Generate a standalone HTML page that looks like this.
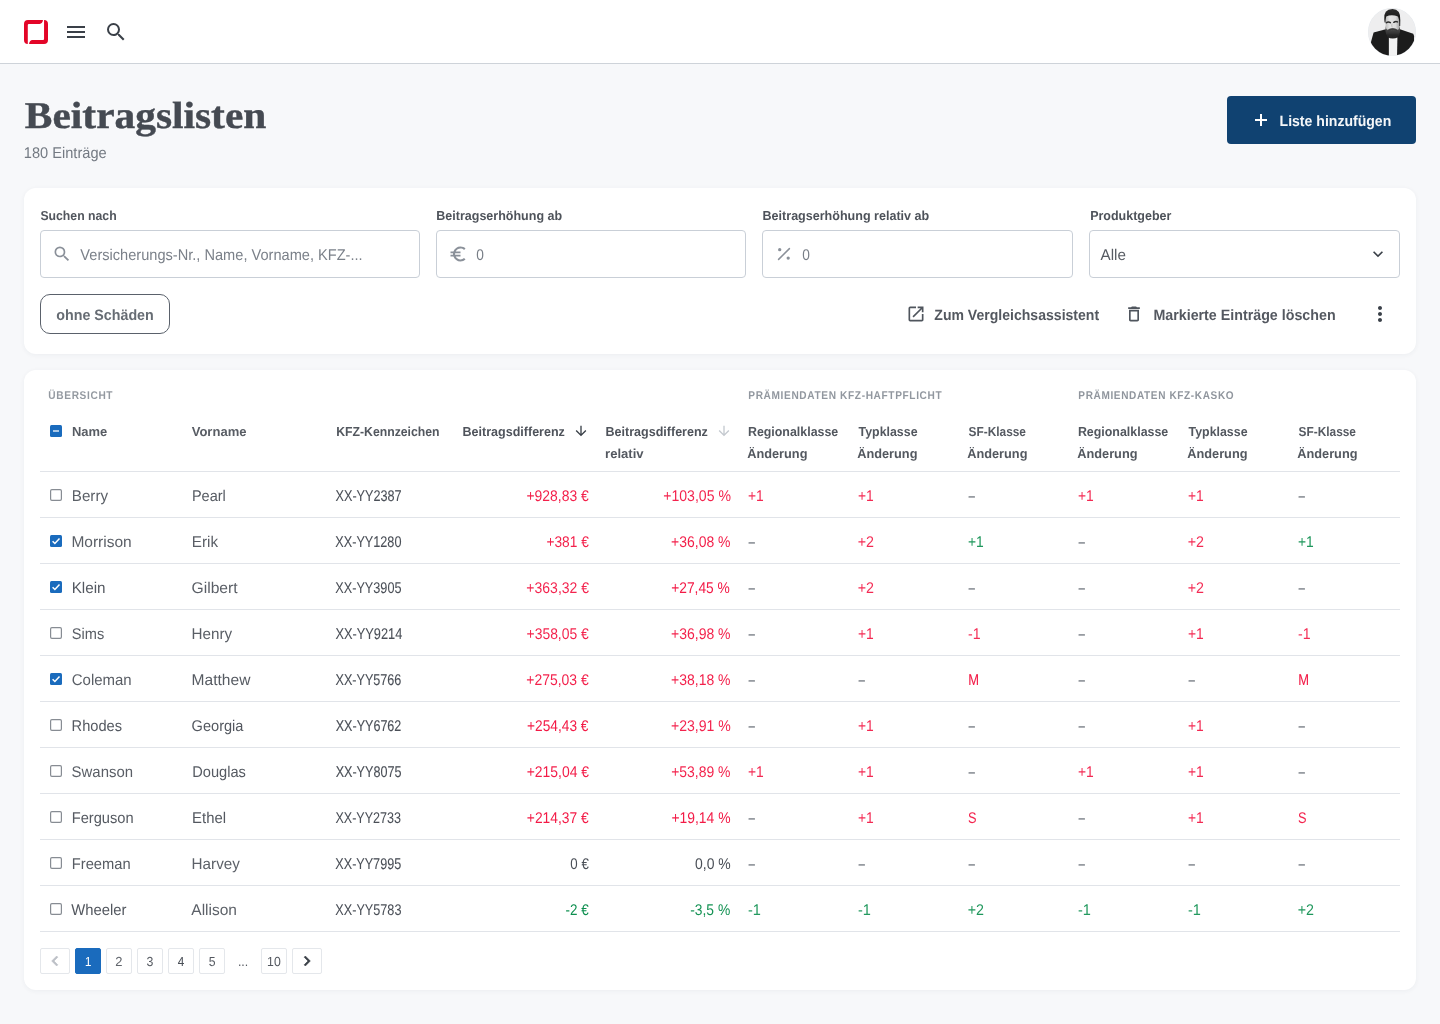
<!DOCTYPE html>
<html lang="de">
<head>
<meta charset="utf-8">
<title>Beitragslisten</title>
<style>
*{box-sizing:border-box;margin:0;padding:0}
html,body{width:1440px;height:1024px;overflow:hidden}
body{background:#f7f8fa;color:#4a4f56}
#app{position:absolute;left:0;top:0;width:1440px;height:1024px;will-change:transform}
svg{display:block}
.t{display:inline-block;position:relative;white-space:pre;transform-origin:0 50%}

/* top bar */
.topbar{position:absolute;left:0;top:0;width:1440px;height:64px;background:#fff;border-bottom:1px solid #ced3d9}
.topbar .logo{position:absolute;left:24px;top:20px;width:24px;height:24px}
.topbar .ic{position:absolute;top:20px;width:24px;height:24px;fill:#3a4048}
.avatar{position:absolute;left:1368px;top:8px;width:48px;height:48px}

/* page head */
h1{position:absolute;left:24px;top:91px;height:48px;line-height:48px;font-weight:700;color:#454a52;white-space:nowrap}
.sub{position:absolute;left:24px;top:141px;height:24px;line-height:24px;color:#6c737c;white-space:nowrap}
.btn-primary{position:absolute;left:1227px;top:96px;width:189px;height:48px;border-radius:4px;background:#104271;color:#fff;border:0}
.btn-primary svg{position:absolute;left:22px;top:12px;width:24px;height:24px;fill:#fff}
.btn-primary .lbl{position:absolute;left:52px;top:13px;height:24px;line-height:24px;white-space:nowrap}

/* cards */
.card{position:absolute;left:24px;width:1392px;background:#fff;border-radius:12px;box-shadow:0 1px 5px rgba(40,50,70,.055)}
.filters{top:188px;height:166px}
.tablecard{top:370px;height:620px}

/* filter fields */
.field{position:absolute;top:0}
.field label{position:absolute;left:0;top:18px;height:20px;line-height:20px;color:#454a52;white-space:nowrap}
.field .inp{position:absolute;left:0;top:42px;height:48px;width:100%;border:1px solid #c9cfd7;border-radius:4px;background:#fff}
.field .inp svg{position:absolute;left:11px;top:13px;width:20px;height:20px;fill:#8a9099}
.field .inp .ph{position:absolute;left:39px;top:12px;height:24px;line-height:24px;color:#767c85;white-space:nowrap}
.field .inp .val{position:absolute;left:11px;top:12px;height:24px;line-height:24px;color:#4a4f57;white-space:nowrap}
.field .inp .chev{left:auto;right:11px;top:13px;fill:#3a4048}
.chip{position:absolute;left:16px;top:106px;width:130px;height:40px;border:1px solid #5a616b;border-radius:10px;background:#fff;color:#5b6169;line-height:38px;padding-top:1px;text-align:center;white-space:nowrap}
.act{position:absolute;top:114px;height:24px;color:#484d55;white-space:nowrap}
.act svg{position:absolute;left:0;top:2px;width:20px;height:20px;fill:#4f555d}
.act .lbl{position:absolute;left:28px;top:1px;height:24px;line-height:24px}
.more{position:absolute;left:1344px;top:114px;width:24px;height:24px;fill:#3a4048}

/* table */
table{position:absolute;left:16px;top:0;width:1360px;border-collapse:collapse;table-layout:fixed}
th,td{text-align:left;padding:0 8px;white-space:nowrap;overflow:visible;font-weight:400}
tr.grp th{height:49px;vertical-align:top;padding-top:18px;line-height:16px;color:#8d939b}
tr.hd th{height:52px;vertical-align:top;padding-top:2px;line-height:22px;color:#484d55;border-bottom:1px solid #e1e4e9;position:relative}
tr.hd th .arr{position:absolute;top:4px;width:16px;height:16px}
tbody td{height:46px;border-bottom:1px solid #e1e4e9;line-height:24px;color:#4a4f57;vertical-align:top;padding-top:12.500px}
td.n,th.n{padding-left:32px;position:relative}
td.r{text-align:right}
td.r2{padding-right:9px}
.cb{position:absolute;left:10px;width:12px;height:12px;border-radius:1.500px}
td .cb{top:17px}
th .cb{top:6px}
.cb.on{background:#1a6bbd}
.cb svg{width:12px;height:12px}
.red{color:#f31a46}
.grn{color:#0d8f4f}
.mut{color:#8f949a}

/* pagination */
.pager{position:absolute;left:16px;top:578px;height:26px}
.pager .pb{position:absolute;top:0;height:26px;width:26px;border:1px solid #e4e7eb;border-radius:2px;background:#fff;line-height:24px;padding-top:1px;text-align:center;color:#4a4f57}
.pager .pb.cur{background:#1a6bbd;border-color:#1a6bbd;color:#fff}
.pager .pb.dots{border-color:transparent;background:transparent}
.pager .pb svg{position:absolute;left:4px;top:2px;width:20px;height:20px}
.pager .pb svg path{stroke-width:.7;stroke-linejoin:round}
body{font-family:"Liberation Sans",sans-serif;font-size:15.5px;text-rendering:geometricPrecision}
.sb{font-weight:700;font-size:15px}
h1{font-family:"Liberation Serif",serif;font-size:38px}
h1 .t{-webkit-text-stroke:.3px currentColor}
.field label{font-size:13.5px}
.field label .sb,tr.hd th .sb{font-size:13px}
tr.grp th{font-size:11.2px;letter-spacing:.7px;font-weight:700}
tr.grp th .t{-webkit-text-stroke:0}
tr.hd th{font-size:13.5px}
.pager .pb{font-size:13.2px}
.mut .t{font-weight:700;-webkit-text-stroke:0}

</style>
</head>
<body>
<div id="app">

<header class="topbar">
  <svg class="logo" viewBox="0 0 24 24"><path fill="#e30528" d="M19 0H4A4 4 0 0 0 0 4V20A4 4 0 0 0 3.800 23.980V4.900Q3.800 3.900 4.800 3.900H15.600C17.600 3.900 18.800 2 19 0ZM20.050 0A4 4 0 0 1 24 4V20A4 4 0 0 1 20 24H5.050C5.250 22 6.450 20.100 8.450 20.100H19.050Q20.050 20.100 20.050 19.100Z"/></svg>
  <svg class="ic" style="left:64px" viewBox="0 0 24 24"><path d="M3 18h18v-2H3v2zm0-5h18v-2H3v2zm0-7v2h18V6H3z"/></svg>
  <svg class="ic" style="left:104px" viewBox="0 0 24 24"><path d="M15.500 14h-.79l-.28-.27A6.471 6.471 0 0 0 16 9.500 6.500 6.500 0 1 0 9.500 16c1.610 0 3.090-.59 4.230-1.570l.27.28v.79l5 4.990L20.490 19l-4.990-5zm-6 0C7.010 14 5 11.990 5 9.500S7.010 5 9.500 5 14 7.010 14 9.500 11.990 14 9.500 14z"/></svg>
  <div class="avatar">
    <svg viewBox="0 0 48 48" width="48" height="48">
      <defs>
        <clipPath id="avc"><circle cx="24" cy="24" r="23.700"/></clipPath>
        <filter id="bl" x="-10%" y="-10%" width="120%" height="120%"><feGaussianBlur stdDeviation=".55"/></filter>
        <linearGradient id="fc" x1="0" y1="0" x2="1" y2="0"><stop offset="0" stop-color="#bdbdbd"/><stop offset=".3" stop-color="#e4e4e4"/><stop offset=".7" stop-color="#dadada"/><stop offset="1" stop-color="#a0a0a0"/></linearGradient>
        <linearGradient id="bd" x1="0" y1="0" x2="0" y2="1"><stop offset="0" stop-color="#8a8a8a"/><stop offset=".3" stop-color="#4a4a4a"/><stop offset=".7" stop-color="#2a2a2a"/><stop offset="1" stop-color="#1f1f1f"/></linearGradient>
        <linearGradient id="hr" x1="0" y1="0" x2="0" y2="1"><stop offset="0" stop-color="#2e2e2e"/><stop offset=".5" stop-color="#1b1b1b"/><stop offset="1" stop-color="#2a2a2a"/></linearGradient>
      </defs>
      <circle cx="24" cy="24" r="24" fill="#e2e7ec"/>
      <g clip-path="url(#avc)">
        <rect width="48" height="48" fill="#eeeeef"/>
        <g filter="url(#bl)">
          <path d="M5.600 24.400L17.800 21.200L32 21.200L45.200 25.700Q46.500 27.500 46 30.500L46.500 50H1L3.100 33.500Z" fill="#1d1d1d"/>
          <path d="M20.900 29.500L29.400 29.500L29 50L20.900 50Z" fill="#f2f2f2"/>
          <path d="M17.500 10Q17.500 6 24 6Q31.300 6 31.500 10L31.800 21Q31 29 24.800 29.500Q18.500 29 17.700 21Z" fill="url(#fc)"/>
          <path d="M16.300 11.500Q15.200 1.200 24.500 1Q32.800 1.200 32.300 12L32.200 18L31.200 18Q31.500 10 29.500 8.200Q23 6.300 18.200 8.600L17.700 11.500L17.500 14.500L16.600 14.500Z" fill="url(#hr)"/>
          <path d="M17.600 17.500Q18 22 19.800 21.800Q21.500 20.300 24.600 20.100Q27.800 20.300 29.500 21.800Q31.300 22 31.900 17.500L32.100 23.500Q31 30.600 24.800 30.600Q18.400 30.600 17.500 23.500Z" fill="url(#bd)"/>
          <path d="M20.800 22.600Q22.500 20.900 24.400 21.300Q26.500 20.900 28.600 22.400" stroke="#3a3a3a" stroke-width="1.100" fill="none" stroke-linecap="round"/>
          <path d="M18.400 14.700Q20.300 13.300 22.400 14.700M25.800 14.300Q27.600 13 29.500 13.900" stroke="#2e2e2e" stroke-width="1.500" fill="none" stroke-linecap="round"/>
          <path d="M24 15.500Q23.300 18.300 24.300 19.300" stroke="#b4b4b4" stroke-width=".8" fill="none"/>
        </g>
      </g>
    </svg>
  </div>
</header>

<h1><span class="t" style="transform:translate(0.87px,1px) scaleX(1.0892);-webkit-text-stroke:0.408px currentColor">Beitragslisten</span></h1>
<div class="sub"><span class="t" style="transform:translate(-0.24px,1px) scaleX(0.9428);opacity:0.945">180 Einträge</span></div>
<div class="btn-primary">
  <svg viewBox="0 0 24 24"><path d="M11 6h2v5h5v2h-5v5h-2v-5H6v-2h5z"/></svg>
  <div class="lbl"><span class="t sb" style="transform:translate(0.55px,1px) scaleX(0.9377);opacity:0.959">Liste hinzufügen</span></div>
</div>

<section class="card filters">
  <div class="field" style="left:16px;width:380px">
    <label><span class="t sb" style="transform:translate(0.4px,0px) scaleX(0.9424);opacity:0.929">Suchen nach</span></label>
    <div class="inp">
      <svg viewBox="0 0 24 24"><path d="M15.500 14h-.79l-.28-.27A6.471 6.471 0 0 0 16 9.500 6.500 6.500 0 1 0 9.500 16c1.610 0 3.090-.59 4.230-1.570l.27.28v.79l5 4.990L20.490 19l-4.990-5zm-6 0C7.010 14 5 11.990 5 9.500S7.010 5 9.500 5 14 7.010 14 9.500 11.990 14 9.500 14z"/></svg>
      <div class="ph"><span class="t" style="transform:translate(0.33px,1px) scaleX(0.9417);opacity:0.963">Versicherungs-Nr., Name, Vorname, KFZ-...</span></div>
    </div>
  </div>
  <div class="field" style="left:412px;width:310px">
    <label><span class="t sb" style="transform:translate(0.3px,0px) scaleX(0.9624);opacity:0.949">Beitragserhöhung ab</span></label>
    <div class="inp">
      <svg viewBox="0 0 24 24"><path d="M15 18.500c-2.510 0-4.680-1.420-5.760-3.500H15v-2H8.580c-.05-.33-.08-.66-.08-1s.03-.67.08-1H15V9H9.240C10.320 6.920 12.500 5.500 15 5.500c1.610 0 3.090.59 4.230 1.570L21 5.300C19.410 3.870 17.300 3 15 3c-3.920 0-7.240 2.510-8.480 6H3v2h3.060c-.04.33-.06.66-.06 1s.02.67.06 1H3v2h3.520c1.240 3.490 4.560 6 8.480 6 2.310 0 4.410-.87 6-2.300l-1.780-1.770c-1.130.98-2.600 1.570-4.220 1.570z"/></svg>
      <div class="ph"><span class="t" style="transform:translate(0.15px,1px) scaleX(0.8849);opacity:0.983">0</span></div>
    </div>
  </div>
  <div class="field" style="left:738px;width:311px">
    <label><span class="t sb" style="transform:translate(0.54px,0px) scaleX(0.9653);opacity:0.953">Beitragserhöhung relativ ab</span></label>
    <div class="inp">
      <svg viewBox="0 0 20 20"><path d="M15.400 4.600L4.600 15.400" fill="none" stroke="#8a9099" stroke-width="1.500" stroke-linecap="round"/><circle cx="5.700" cy="5.700" r="1.650"/><circle cx="14.200" cy="14.100" r="1.650"/></svg>
      <div class="ph"><span class="t" style="transform:translate(0.15px,1px) scaleX(0.8849);opacity:0.983">0</span></div>
    </div>
  </div>
  <div class="field" style="left:1065px;width:311px">
    <label><span class="t sb" style="transform:translate(1.13px,0px) scaleX(0.9607);opacity:0.952">Produktgeber</span></label>
    <div class="inp">
      <div class="val"><span class="t" style="transform:translate(-0.51px,1px) scaleX(0.9811);opacity:0.925">Alle</span></div>
      <svg class="chev" viewBox="0 0 24 24"><path d="M7.410 8.590L12 13.170l4.590-4.580L18 10l-6 6-6-6 1.410-1.410z"/></svg>
    </div>
  </div>
  <div class="chip"><span class="t sb" style="transform:translate(2.28px,1px) scaleX(0.9507);opacity:0.93">ohne Schäden</span></div>
  <div class="act" style="left:882px;width:200px">
    <svg viewBox="0 0 24 24"><path d="M19 19H5V5h7V3H5a2 2 0 0 0-2 2v14a2 2 0 0 0 2 2h14c1.100 0 2-.9 2-2v-7h-2v7zM14 3v2h3.590l-9.830 9.830 1.410 1.410L19 6.410V10h2V3h-7z"/></svg>
    <div class="lbl"><span class="t sb" style="transform:translate(0.3px,1px) scaleX(0.937);opacity:0.936">Zum Vergleichsassistent</span></div>
  </div>
  <div class="act" style="left:1100px;width:220px">
    <svg viewBox="0 0 24 24"><path d="M16 9v10H8V9h8m-1.500-6h-5l-1 1H5v2h14V4h-3.500l-1-1zM18 7H6v12c0 1.100.9 2 2 2h8c1.100 0 2-.9 2-2V7z"/></svg>
    <div class="lbl"><span class="t sb" style="transform:translate(1.4px,1px) scaleX(0.9503);opacity:0.932">Markierte Einträge löschen</span></div>
  </div>
  <svg class="more" viewBox="0 0 24 24"><path d="M12 8c1.100 0 2-.9 2-2s-.9-2-2-2-2 .9-2 2 .9 2 2 2zm0 2c-1.100 0-2 .9-2 2s.9 2 2 2 2-.9 2-2-.9-2-2-2zm0 6c-1.100 0-2 .9-2 2s.9 2 2 2 2-.9 2-2-.9-2-2-2z"/></svg>
</section>

<section class="card tablecard">
<table>
<colgroup><col style="width:144px"><col style="width:144px"><col style="width:126px"><col style="width:143px"><col style="width:143px"><col style="width:110px"><col style="width:110px"><col style="width:110px"><col style="width:110px"><col style="width:110px"><col style="width:110px"></colgroup>
<thead>
<tr class="grp"><th colspan="5"><span class="t" style="transform:translate(0.33px,0px) scaleX(0.9059);opacity:0.942">ÜBERSICHT</span></th><th colspan="3"><span class="t" style="transform:translate(0.26px,0px) scaleX(0.9045);opacity:0.957">PRÄMIENDATEN KFZ-HAFTPFLICHT</span></th><th colspan="3"><span class="t" style="transform:translate(0.33px,0px) scaleX(0.8977);opacity:0.971">PRÄMIENDATEN KFZ-KASKO</span></th></tr>
<tr class="hd"><th class="n"><span class="cb on"><svg viewBox="0 0 12 12"><path d="M3 6h6" fill="none" stroke="#fff" stroke-opacity=".75" stroke-width="1.700"/></svg></span><span class="t sb" style="transform:translate(-0.01px,0px) scaleX(0.9966);opacity:0.913">Name</span></th><th><span class="t sb" style="transform:translate(-0.31px,0px) scaleX(1.0017);opacity:0.906">Vorname</span></th><th><span class="t sb" style="transform:translate(0.14px,0px) scaleX(0.9424);opacity:0.936">KFZ-Kennzeichen</span></th><th><span class="t sb" style="transform:translate(0.55px,0px) scaleX(0.9636);opacity:0.96">Beitragsdifferenz</span><svg class="arr" style="left:119px" viewBox="0 0 24 24"><path fill="#3a4048" d="M20 12l-1.410-1.410L13 16.170V4h-2v12.170l-5.580-5.590L4 12l8 8 8-8z"/></svg></th><th><span class="t sb" style="transform:translate(0.55px,0px) scaleX(0.9636);opacity:0.96">Beitragsdifferenz</span><br><span class="t sb" style="transform:translate(0.07px,0px) scaleX(1.007);opacity:0.932">relativ</span><svg class="arr" style="left:119px" viewBox="0 0 24 24"><path fill="#c4c9cf" d="M20 12l-1.410-1.410L13 16.170V4h-2v12.170l-5.580-5.590L4 12l8 8 8-8z"/></svg></th><th><span class="t sb" style="transform:translate(-0.08px,0px) scaleX(0.954);opacity:0.941">Regionalklasse</span><br><span class="t sb" style="transform:translate(-0.76px,0px) scaleX(0.9804);opacity:0.936">Änderung</span></th><th><span class="t sb" style="transform:translate(0.55px,0px) scaleX(0.9528);opacity:0.939">Typklasse</span><br><span class="t sb" style="transform:translate(-0.76px,0px) scaleX(0.9804);opacity:0.936">Änderung</span></th><th><span class="t sb" style="transform:translate(0.5px,0px) scaleX(0.9143);opacity:0.922">SF-Klasse</span><br><span class="t sb" style="transform:translate(-0.76px,0px) scaleX(0.9804);opacity:0.936">Änderung</span></th><th><span class="t sb" style="transform:translate(-0.12px,0px) scaleX(0.9548);opacity:0.941">Regionalklasse</span><br><span class="t sb" style="transform:translate(-0.74px,0px) scaleX(0.9813);opacity:0.936">Änderung</span></th><th><span class="t sb" style="transform:translate(0.55px,0px) scaleX(0.9528);opacity:0.939">Typklasse</span><br><span class="t sb" style="transform:translate(-0.74px,0px) scaleX(0.9813);opacity:0.936">Änderung</span></th><th><span class="t sb" style="transform:translate(0.5px,0px) scaleX(0.9143);opacity:0.922">SF-Klasse</span><br><span class="t sb" style="transform:translate(-0.74px,0px) scaleX(0.9813);opacity:0.936">Änderung</span></th></tr>
</thead><tbody>
<tr><td class="n"><span class="cb"><svg viewBox="0 0 12 12"><rect x=".6" y=".6" width="10.800" height="10.800" rx="1.300" fill="#fff" stroke="#878c93" stroke-width="1.200"/></svg></span><span class="t" style="transform:translate(-0.25px,1px) scaleX(0.9796);opacity:0.9">Berry</span></td><td><span class="t" style="transform:translate(-0.09px,1px) scaleX(0.9375);opacity:0.93">Pearl</span></td><td class="k"><span class="t" style="transform:translate(-0.46px,1px) scaleX(0.8154);-webkit-text-stroke:0.093px currentColor">XX-YY2387</span></td><td class="r red"><span class="t" style="transform:translate(6.45px,1px) scaleX(0.8983);opacity:0.976">+928,83 €</span></td><td class="r r2 red"><span class="t" style="transform:translate(6.21px,1px) scaleX(0.9083);opacity:0.957">+103,05 %</span></td><td class="red"><span class="t" style="transform:translate(-0.03px,1px) scaleX(0.8949);opacity:0.931">+1</span></td><td class="red"><span class="t" style="transform:translate(-0.03px,1px) scaleX(0.8949);opacity:0.931">+1</span></td><td class="mut"><span class="t" style="transform:translate(0.25px,1px) scaleX(0.8149);-webkit-text-stroke:0.052px currentColor">–</span></td><td class="red"><span class="t" style="transform:translate(-0.03px,1px) scaleX(0.8949);opacity:0.931">+1</span></td><td class="red"><span class="t" style="transform:translate(-0.03px,1px) scaleX(0.8949);opacity:0.931">+1</span></td><td class="mut"><span class="t" style="transform:translate(0.25px,1px) scaleX(0.8149);-webkit-text-stroke:0.052px currentColor">–</span></td></tr>
<tr><td class="n"><span class="cb on"><svg viewBox="0 0 12 12"><path d="M2.600 6.200l2.300 2.300 4.600-4.900" fill="none" stroke="#fff" stroke-width="1.500"/></svg></span><span class="t" style="transform:translate(-0.61px,1px) scaleX(1.001);opacity:0.902">Morrison</span></td><td><span class="t" style="transform:translate(-0.21px,1px) scaleX(0.9823);opacity:0.911">Erik</span></td><td class="k"><span class="t" style="transform:translate(-0.7px,1px) scaleX(0.8166);-webkit-text-stroke:0.093px currentColor">XX-YY1280</span></td><td class="r red"><span class="t" style="transform:translate(5.41px,1px) scaleX(0.8864);opacity:0.97">+381 €</span></td><td class="r r2 red"><span class="t" style="transform:translate(6.11px,1px) scaleX(0.9003);opacity:0.978">+36,08 %</span></td><td class="mut"><span class="t" style="transform:translate(0.25px,1px) scaleX(0.8149);-webkit-text-stroke:0.052px currentColor">–</span></td><td class="red"><span class="t" style="transform:translate(-0.25px,1px) scaleX(0.9214);opacity:0.925">+2</span></td><td class="grn"><span class="t" style="transform:translate(-0.03px,1px) scaleX(0.895);opacity:0.927">+1</span></td><td class="mut"><span class="t" style="transform:translate(0.25px,1px) scaleX(0.8149);-webkit-text-stroke:0.052px currentColor">–</span></td><td class="red"><span class="t" style="transform:translate(-0.25px,1px) scaleX(0.9214);opacity:0.925">+2</span></td><td class="grn"><span class="t" style="transform:translate(-0.03px,1px) scaleX(0.895);opacity:0.927">+1</span></td></tr>
<tr><td class="n"><span class="cb on"><svg viewBox="0 0 12 12"><path d="M2.600 6.200l2.300 2.300 4.600-4.900" fill="none" stroke="#fff" stroke-width="1.500"/></svg></span><span class="t" style="transform:translate(-0.33px,1px) scaleX(0.9841);opacity:0.944">Klein</span></td><td><span class="t" style="transform:translate(-0.47px,1px) scaleX(1.0093);opacity:0.911">Gilbert</span></td><td class="k"><span class="t" style="transform:translate(-0.69px,1px) scaleX(0.8172);-webkit-text-stroke:0.06px currentColor">XX-YY3905</span></td><td class="r red"><span class="t" style="transform:translate(6.36px,1px) scaleX(0.9029);opacity:0.956">+363,32 €</span></td><td class="r r2 red"><span class="t" style="transform:translate(6.22px,1px) scaleX(0.8899)">+27,45 %</span></td><td class="mut"><span class="t" style="transform:translate(0.25px,1px) scaleX(0.8149);-webkit-text-stroke:0.052px currentColor">–</span></td><td class="red"><span class="t" style="transform:translate(-0.25px,1px) scaleX(0.9214);opacity:0.925">+2</span></td><td class="mut"><span class="t" style="transform:translate(0.25px,1px) scaleX(0.8149);-webkit-text-stroke:0.052px currentColor">–</span></td><td class="mut"><span class="t" style="transform:translate(0.25px,1px) scaleX(0.8149);-webkit-text-stroke:0.052px currentColor">–</span></td><td class="red"><span class="t" style="transform:translate(-0.25px,1px) scaleX(0.9214);opacity:0.925">+2</span></td><td class="mut"><span class="t" style="transform:translate(0.25px,1px) scaleX(0.8149);-webkit-text-stroke:0.052px currentColor">–</span></td></tr>
<tr><td class="n"><span class="cb"><svg viewBox="0 0 12 12"><rect x=".6" y=".6" width="10.800" height="10.800" rx="1.300" fill="#fff" stroke="#878c93" stroke-width="1.200"/></svg></span><span class="t" style="transform:translate(-0.14px,1px) scaleX(0.9418);opacity:0.911">Sims</span></td><td><span class="t" style="transform:translate(-0.46px,1px) scaleX(0.9818);opacity:0.914">Henry</span></td><td class="k"><span class="t" style="transform:translate(-0.54px,1px) scaleX(0.8247);-webkit-text-stroke:0.093px currentColor">XX-YY9214</span></td><td class="r red"><span class="t" style="transform:translate(6.55px,1px) scaleX(0.8971);opacity:0.964">+358,05 €</span></td><td class="r r2 red"><span class="t" style="transform:translate(6.03px,1px) scaleX(0.9027);opacity:0.966">+36,98 %</span></td><td class="mut"><span class="t" style="transform:translate(0.25px,1px) scaleX(0.8149);-webkit-text-stroke:0.052px currentColor">–</span></td><td class="red"><span class="t" style="transform:translate(-0.03px,1px) scaleX(0.8949);opacity:0.931">+1</span></td><td class="red"><span class="t" style="transform:translate(-0.03px,1px) scaleX(0.9115);opacity:0.906">-1</span></td><td class="mut"><span class="t" style="transform:translate(0.25px,1px) scaleX(0.8149);-webkit-text-stroke:0.052px currentColor">–</span></td><td class="red"><span class="t" style="transform:translate(-0.03px,1px) scaleX(0.8949);opacity:0.931">+1</span></td><td class="red"><span class="t" style="transform:translate(-0.03px,1px) scaleX(0.9115);opacity:0.906">-1</span></td></tr>
<tr><td class="n"><span class="cb on"><svg viewBox="0 0 12 12"><path d="M2.600 6.200l2.300 2.300 4.600-4.900" fill="none" stroke="#fff" stroke-width="1.500"/></svg></span><span class="t" style="transform:translate(-0.24px,1px) scaleX(0.9657);opacity:0.912">Coleman</span></td><td><span class="t" style="transform:translate(-0.38px,1px) scaleX(1.0026);opacity:0.931">Matthew</span></td><td class="k"><span class="t" style="transform:translate(-0.52px,1px) scaleX(0.8133);-webkit-text-stroke:0.107px currentColor">XX-YY5766</span></td><td class="r red"><span class="t" style="transform:translate(6.27px,1px) scaleX(0.9005);opacity:0.972">+275,03 €</span></td><td class="r r2 red"><span class="t" style="transform:translate(6.06px,1px) scaleX(0.9013);opacity:0.974">+38,18 %</span></td><td class="mut"><span class="t" style="transform:translate(0.25px,1px) scaleX(0.8149);-webkit-text-stroke:0.052px currentColor">–</span></td><td class="mut"><span class="t" style="transform:translate(0.25px,1px) scaleX(0.8149);-webkit-text-stroke:0.052px currentColor">–</span></td><td class="red"><span class="t" style="transform:translate(0.33px,1px) scaleX(0.8328);-webkit-text-stroke:0.1px currentColor">M</span></td><td class="mut"><span class="t" style="transform:translate(0.25px,1px) scaleX(0.8149);-webkit-text-stroke:0.052px currentColor">–</span></td><td class="mut"><span class="t" style="transform:translate(0.25px,1px) scaleX(0.8149);-webkit-text-stroke:0.052px currentColor">–</span></td><td class="red"><span class="t" style="transform:translate(0.33px,1px) scaleX(0.8328);-webkit-text-stroke:0.1px currentColor">M</span></td></tr>
<tr><td class="n"><span class="cb"><svg viewBox="0 0 12 12"><rect x=".6" y=".6" width="10.800" height="10.800" rx="1.300" fill="#fff" stroke="#878c93" stroke-width="1.200"/></svg></span><span class="t" style="transform:translate(-0.41px,1px) scaleX(0.9437);opacity:0.944">Rhodes</span></td><td><span class="t" style="transform:translate(-0.38px,1px) scaleX(0.94);opacity:0.949">Georgia</span></td><td class="k"><span class="t" style="transform:translate(-0.28px,1px) scaleX(0.81);-webkit-text-stroke:0.132px currentColor">XX-YY6762</span></td><td class="r red"><span class="t" style="transform:translate(7.1px,1px) scaleX(0.8837);-webkit-text-stroke:0.014px currentColor">+254,43 €</span></td><td class="r r2 red"><span class="t" style="transform:translate(5.99px,1px) scaleX(0.9078);opacity:0.958">+23,91 %</span></td><td class="mut"><span class="t" style="transform:translate(0.25px,1px) scaleX(0.8149);-webkit-text-stroke:0.052px currentColor">–</span></td><td class="red"><span class="t" style="transform:translate(-0.03px,1px) scaleX(0.8949);opacity:0.931">+1</span></td><td class="mut"><span class="t" style="transform:translate(0.25px,1px) scaleX(0.8149);-webkit-text-stroke:0.052px currentColor">–</span></td><td class="mut"><span class="t" style="transform:translate(0.25px,1px) scaleX(0.8149);-webkit-text-stroke:0.052px currentColor">–</span></td><td class="red"><span class="t" style="transform:translate(-0.03px,1px) scaleX(0.8949);opacity:0.931">+1</span></td><td class="mut"><span class="t" style="transform:translate(0.25px,1px) scaleX(0.8149);-webkit-text-stroke:0.052px currentColor">–</span></td></tr>
<tr><td class="n"><span class="cb"><svg viewBox="0 0 12 12"><rect x=".6" y=".6" width="10.800" height="10.800" rx="1.300" fill="#fff" stroke="#878c93" stroke-width="1.200"/></svg></span><span class="t" style="transform:translate(-0.4px,1px) scaleX(0.9629);opacity:0.911">Swanson</span></td><td><span class="t" style="transform:translate(0.21px,1px) scaleX(0.9447);opacity:0.934">Douglas</span></td><td class="k"><span class="t" style="transform:translate(-0.37px,1px) scaleX(0.8121);-webkit-text-stroke:0.117px currentColor">XX-YY8075</span></td><td class="r red"><span class="t" style="transform:translate(6.68px,1px) scaleX(0.8996);opacity:0.99">+215,04 €</span></td><td class="r r2 red"><span class="t" style="transform:translate(6.14px,1px) scaleX(0.8994);opacity:0.964">+53,89 %</span></td><td class="red"><span class="t" style="transform:translate(-0.03px,1px) scaleX(0.8949);opacity:0.931">+1</span></td><td class="red"><span class="t" style="transform:translate(-0.03px,1px) scaleX(0.8949);opacity:0.931">+1</span></td><td class="mut"><span class="t" style="transform:translate(0.25px,1px) scaleX(0.8149);-webkit-text-stroke:0.052px currentColor">–</span></td><td class="red"><span class="t" style="transform:translate(-0.03px,1px) scaleX(0.8949);opacity:0.931">+1</span></td><td class="red"><span class="t" style="transform:translate(-0.03px,1px) scaleX(0.8949);opacity:0.931">+1</span></td><td class="mut"><span class="t" style="transform:translate(0.25px,1px) scaleX(0.8149);-webkit-text-stroke:0.052px currentColor">–</span></td></tr>
<tr><td class="n"><span class="cb"><svg viewBox="0 0 12 12"><rect x=".6" y=".6" width="10.800" height="10.800" rx="1.300" fill="#fff" stroke="#878c93" stroke-width="1.200"/></svg></span><span class="t" style="transform:translate(-0.3px,1px) scaleX(0.9459);opacity:0.939">Ferguson</span></td><td><span class="t" style="transform:translate(0.1px,1px) scaleX(0.9586);opacity:0.95">Ethel</span></td><td class="k"><span class="t" style="transform:translate(-0.58px,1px) scaleX(0.8095);-webkit-text-stroke:0.056px currentColor">XX-YY2733</span></td><td class="r red"><span class="t" style="transform:translate(6.85px,1px) scaleX(0.8911)">+214,37 €</span></td><td class="r r2 red"><span class="t" style="transform:translate(6.41px,1px) scaleX(0.8959);opacity:0.995">+19,14 %</span></td><td class="mut"><span class="t" style="transform:translate(0.25px,1px) scaleX(0.8149);-webkit-text-stroke:0.052px currentColor">–</span></td><td class="red"><span class="t" style="transform:translate(-0.03px,1px) scaleX(0.8949);opacity:0.931">+1</span></td><td class="red"><span class="t" style="transform:translate(-0.01px,1px) scaleX(0.8246);opacity:0.96">S</span></td><td class="mut"><span class="t" style="transform:translate(0.25px,1px) scaleX(0.8149);-webkit-text-stroke:0.052px currentColor">–</span></td><td class="red"><span class="t" style="transform:translate(-0.03px,1px) scaleX(0.8949);opacity:0.931">+1</span></td><td class="red"><span class="t" style="transform:translate(-0.01px,1px) scaleX(0.8246);opacity:0.96">S</span></td></tr>
<tr><td class="n"><span class="cb"><svg viewBox="0 0 12 12"><rect x=".6" y=".6" width="10.800" height="10.800" rx="1.300" fill="#fff" stroke="#878c93" stroke-width="1.200"/></svg></span><span class="t" style="transform:translate(-0.2px,1px) scaleX(0.9479);opacity:0.926">Freeman</span></td><td><span class="t" style="transform:translate(-0.42px,1px) scaleX(0.9828);opacity:0.897">Harvey</span></td><td class="k"><span class="t" style="transform:translate(-0.65px,1px) scaleX(0.8121);-webkit-text-stroke:0.086px currentColor">XX-YY7995</span></td><td class="r "><span class="t" style="transform:translate(3.35px,1px) scaleX(0.8573)">0 €</span></td><td class="r r2 "><span class="t" style="transform:translate(4px,1px) scaleX(0.9002)">0,0 %</span></td><td class="mut"><span class="t" style="transform:translate(0.25px,1px) scaleX(0.8149);-webkit-text-stroke:0.052px currentColor">–</span></td><td class="mut"><span class="t" style="transform:translate(0.25px,1px) scaleX(0.8149);-webkit-text-stroke:0.052px currentColor">–</span></td><td class="mut"><span class="t" style="transform:translate(0.25px,1px) scaleX(0.8149);-webkit-text-stroke:0.052px currentColor">–</span></td><td class="mut"><span class="t" style="transform:translate(0.25px,1px) scaleX(0.8149);-webkit-text-stroke:0.052px currentColor">–</span></td><td class="mut"><span class="t" style="transform:translate(0.25px,1px) scaleX(0.8149);-webkit-text-stroke:0.052px currentColor">–</span></td><td class="mut"><span class="t" style="transform:translate(0.25px,1px) scaleX(0.8149);-webkit-text-stroke:0.052px currentColor">–</span></td></tr>
<tr><td class="n"><span class="cb"><svg viewBox="0 0 12 12"><rect x=".6" y=".6" width="10.800" height="10.800" rx="1.300" fill="#fff" stroke="#878c93" stroke-width="1.200"/></svg></span><span class="t" style="transform:translate(-0.65px,1px) scaleX(0.9562);opacity:0.952">Wheeler</span></td><td><span class="t" style="transform:translate(-0.67px,1px);opacity:0.899">Allison</span></td><td class="k"><span class="t" style="transform:translate(-0.66px,1px) scaleX(0.816);-webkit-text-stroke:0.056px currentColor">XX-YY5783</span></td><td class="r grn"><span class="t" style="transform:translate(3.61px,1px) scaleX(0.8664)">-2 €</span></td><td class="r r2 grn"><span class="t" style="transform:translate(4.2px,1px) scaleX(0.8939);opacity:0.969">-3,5 %</span></td><td class="grn"><span class="t" style="transform:translate(-0.05px,1px) scaleX(0.9379);opacity:0.907">-1</span></td><td class="grn"><span class="t" style="transform:translate(-0.05px,1px) scaleX(0.9379);opacity:0.907">-1</span></td><td class="grn"><span class="t" style="transform:translate(-0.26px,1px) scaleX(0.921);opacity:0.925">+2</span></td><td class="grn"><span class="t" style="transform:translate(-0.05px,1px) scaleX(0.9379);opacity:0.907">-1</span></td><td class="grn"><span class="t" style="transform:translate(-0.05px,1px) scaleX(0.9379);opacity:0.907">-1</span></td><td class="grn"><span class="t" style="transform:translate(-0.26px,1px) scaleX(0.921);opacity:0.925">+2</span></td></tr>
</tbody></table>
<nav class="pager">
<span class="pb" style="left:0px;width:30px"><svg viewBox="0 0 24 24"><path fill="#bcc0c6" stroke="#bcc0c6" d="M15.410 7.410L14 6l-6 6 6 6 1.410-1.410L10.830 12z"/></svg></span>
<span class="pb cur" style="left:35px;width:26px"><span class="t" style="transform:translate(0.91px,0px) scaleX(0.8744);-webkit-text-stroke:0.056px currentColor">1</span></span>
<span class="pb" style="left:66px;width:26px"><span class="t" style="transform:translate(0.35px,0px) scaleX(0.9833);opacity:0.869">2</span></span>
<span class="pb" style="left:97px;width:26px"><span class="t" style="transform:translate(0.54px,0px) scaleX(0.9343);opacity:0.932">3</span></span>
<span class="pb" style="left:128px;width:26px"><span class="t" style="transform:translate(0.7px,0px) scaleX(0.891);-webkit-text-stroke:0.071px currentColor">4</span></span>
<span class="pb" style="left:159px;width:26px"><span class="t" style="transform:translate(0.69px,0px) scaleX(0.9269);opacity:0.949">5</span></span>
<span class="pb dots" style="left:190px;width:26px"><span class="t" style="transform:translate(-0.11px,0px) scaleX(0.9364);opacity:0.942">...</span></span>
<span class="pb" style="left:221px;width:26px"><span class="t" style="transform:translate(0.09px,0px) scaleX(0.9303);opacity:0.944">10</span></span>
<span class="pb" style="left:252px;width:30px"><svg viewBox="0 0 24 24"><path fill="#3a4048" stroke="#3a4048" d="M10 6L8.590 7.410 13.170 12l-4.580 4.590L10 18l6-6z"/></svg></span>
</nav>
</section>

</div>
</body>
</html>
